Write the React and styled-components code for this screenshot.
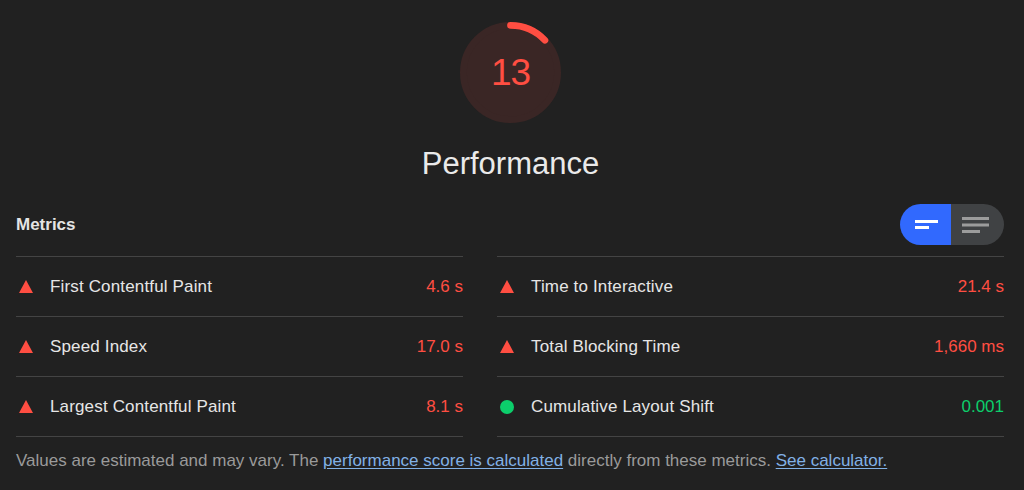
import styled, { createGlobalStyle } from "styled-components";

const GlobalStyle = createGlobalStyle`
  body {
    margin: 0;
    background: #212121;
    font-family: "Liberation Sans", Arial, sans-serif;
    color: #e6e6e6;
  }
`;

const Page = styled.div`
  width: 1024px;
  height: 490px;
  overflow: hidden;
  padding: 22px 20px 0 16px;
  box-sizing: border-box;
`;

const ScoreHeader = styled.div`
  display: flex;
  flex-direction: column;
  align-items: center;
  padding-left: 1px;
`;

const Gauge = styled.div`
  position: relative;
  width: 101px;
  height: 101px;
`;

const GaugeValue = styled.div`
  position: absolute;
  inset: 0;
  display: flex;
  align-items: center;
  justify-content: center;
  font-size: 37px;
  letter-spacing: -1px;
  color: #ff4e42;
  padding-top: 1px;
`;

const Title = styled.h1`
  margin: 23px 0 0;
  font-size: 31px;
  line-height: 36px;
  font-weight: 400;
  color: #eaeaea;
`;

const SectionHeader = styled.div`
  display: flex;
  align-items: center;
  justify-content: space-between;
  height: 41px;
  margin-top: 22px;
  padding-bottom: 11px;
`;

const SectionTitle = styled.h2`
  margin: 0;
  font-size: 17px;
  font-weight: 700;
  color: #e4e4e4;
`;

const Toggle = styled.div`
  display: flex;
  width: 104px;
  height: 41px;
  border-radius: 21px;
  overflow: hidden;
`;

const ToggleHalf = styled.button`
  flex: 1;
  border: none;
  padding: 0;
  display: flex;
  align-items: center;
  justify-content: center;
  background: ${(p) => (p.$active ? "#3169fe" : "#404244")};
  padding-left: ${(p) => (p.$active ? "2px" : "0")};
  padding-right: ${(p) => (p.$active ? "0" : "4px")};
  cursor: pointer;
`;

const Grid = styled.div`
  display: grid;
  grid-template-columns: 447px 507px;
  column-gap: 34px;
`;

const Column = styled.div`
  display: flex;
  flex-direction: column;
  border-bottom: 1px solid #444;
`;

const Row = styled.div`
  display: flex;
  align-items: center;
  height: 59px;
  border-top: 1px solid #444;
  font-size: 17px;
`;

const Icon = styled.span`
  width: 14px;
  height: 14px;
  margin-left: 3px;
  margin-right: 17px;
  display: flex;
  align-items: center;
  justify-content: center;
  flex-shrink: 0;
`;

const Label = styled.span`
  flex: 1;
  color: #e6e6e6;
  letter-spacing: 0.15px;
`;

const Value = styled.span`
  color: ${(p) => (p.$pass ? "#0cce6b" : "#ff4e42")};
`;

const Note = styled.p`
  margin: 12px 0 0;
  font-size: 17px;
  line-height: 24px;
  color: #9a9a9a;
`;

const NoteLink = styled.a`
  color: #82b1e6;
  text-decoration: underline;
  text-underline-offset: 2px;
`;

const left = [
  { label: "First Contentful Paint", value: "4.6 s" },
  { label: "Speed Index", value: "17.0 s" },
  { label: "Largest Contentful Paint", value: "8.1 s" },
];

const right = [
  { label: "Time to Interactive", value: "21.4 s" },
  { label: "Total Blocking Time", value: "1,660 ms" },
  { label: "Cumulative Layout Shift", value: "0.001", pass: true },
];

const FailIcon = () => (
  <svg width="14" height="13" viewBox="0 0 14 13">
    <polygon points="7,0 14,13 0,13" fill="#ff4e42" />
  </svg>
);

const PassIcon = () => (
  <svg width="14" height="14" viewBox="0 0 14 14">
    <circle cx="7" cy="7" r="7" fill="#0cce6b" />
  </svg>
);

const Metric = ({ label, value, pass }) => (
  <Row>
    <Icon>{pass ? <PassIcon /> : <FailIcon />}</Icon>
    <Label>{label}</Label>
    <Value $pass={pass}>{value}</Value>
  </Row>
);

const score = 13;
const circ = 2 * Math.PI * 56;

export default function App() {
  return (
    <Page>
      <GlobalStyle />
      <ScoreHeader>
        <Gauge>
          <svg width="101" height="101" viewBox="0 0 120 120">
            <circle cx="60" cy="60" r="56" fill="#3a2625" stroke="#3a2625" strokeWidth="8" />
            <circle
              cx="60"
              cy="60"
              r="56"
              fill="none"
              stroke="#ff4e42"
              strokeWidth="8"
              strokeLinecap="round"
              strokeDasharray={`${(score / 100) * circ} ${circ}`}
              transform="rotate(-90 60 60)"
            />
          </svg>
          <GaugeValue>{score}</GaugeValue>
        </Gauge>
        <Title>Performance</Title>
      </ScoreHeader>

      <SectionHeader>
        <SectionTitle>Metrics</SectionTitle>
        <Toggle>
          <ToggleHalf $active aria-label="Compact view">
            <svg width="23" height="9" viewBox="0 0 23 9">
              <rect x="0" y="0" width="23" height="3" fill="#fff" />
              <rect x="0" y="6" width="14" height="3" fill="#fff" />
            </svg>
          </ToggleHalf>
          <ToggleHalf aria-label="Expanded view">
            <svg width="27" height="16" viewBox="0 0 27 16">
              <rect x="0" y="0" width="27" height="3" fill="#9c9c9c" />
              <rect x="0" y="6.5" width="27" height="3" fill="#9c9c9c" />
              <rect x="0" y="13" width="18" height="3" fill="#9c9c9c" />
            </svg>
          </ToggleHalf>
        </Toggle>
      </SectionHeader>

      <Grid>
        <Column>
          {left.map((m) => (
            <Metric key={m.label} {...m} />
          ))}
        </Column>
        <Column>
          {right.map((m) => (
            <Metric key={m.label} {...m} />
          ))}
        </Column>
      </Grid>

      <Note>
        Values are estimated and may vary. The{" "}
        <NoteLink href="#">performance score is calculated</NoteLink> directly from these
        metrics. <NoteLink href="#">See calculator.</NoteLink>
      </Note>
    </Page>
  );
}
